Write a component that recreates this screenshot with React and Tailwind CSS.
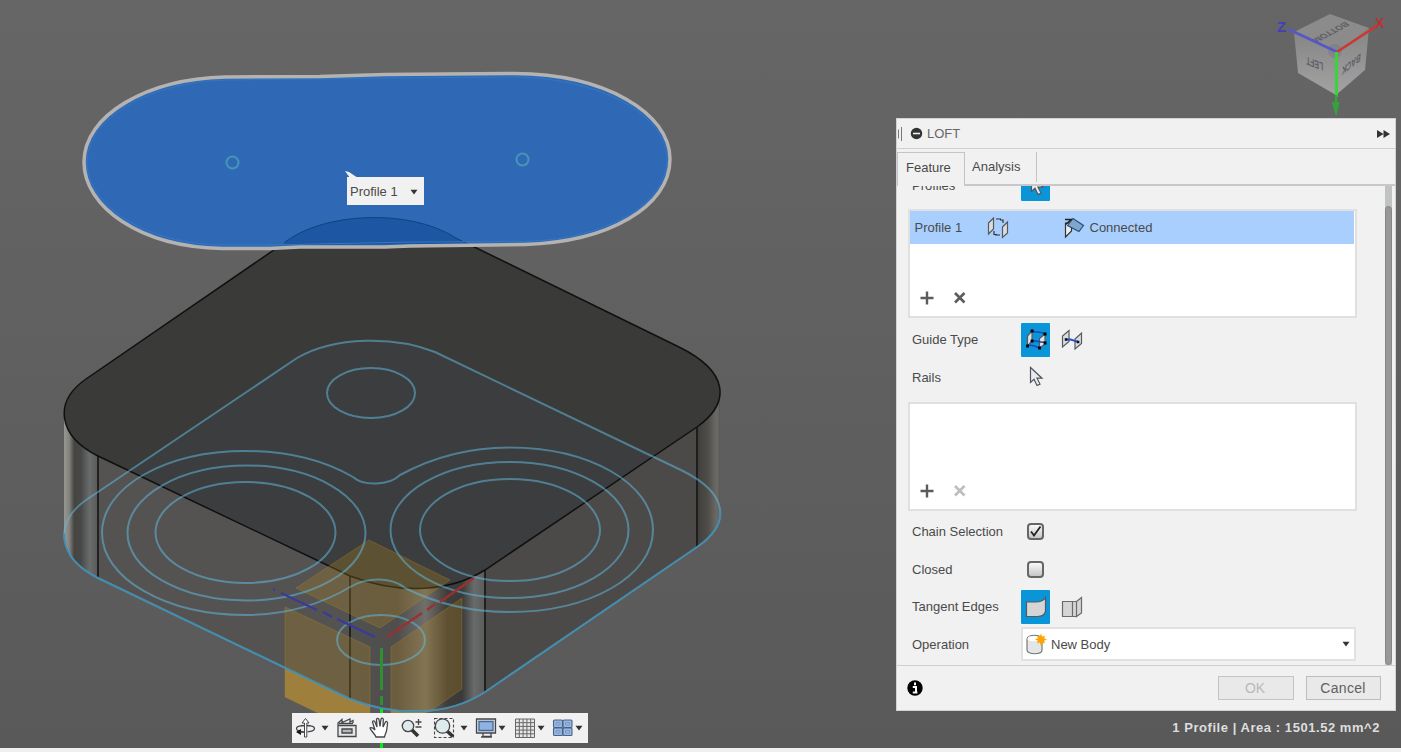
import React from "react";

const TOP_FACE =
  "M86 379 L284 243 C322 212 410 208 456 238 L679 347 C728 371 732 402 697 427 L485 570 C450 592 400 595 350 576 L98 456 C58 436 53 402 86 379 Z";
const BOTTOM_FACE =
  "M86 500 L297 358 C335 336 395 336 435 352 L683 471 C729 494 731 524 697 547 L485 692 C450 715 398 718 350 699 L98 578 C58 558 53 523 86 500 Z";
const PILL =
  "M225 77 L320 76.500 L385 74.500 L515 73.500 C605 74 670 113 670 159 C670 207 608 242 525 244.500 L410 246 L385 247 L300 247 L270 248.500 L222 248.500 C140 247 84 207 84 162 C84 115 147 79 225 77 Z";

function Scene() {
  return (
    <svg className="absolute inset-0" width="1401" height="748" viewBox="0 0 1401 748">
      <defs>
        <linearGradient id="cylL" x1="64" x2="98" y1="0" y2="0" gradientUnits="userSpaceOnUse">
          <stop offset="0" stopColor="#979792" />
          <stop offset="0.15" stopColor="#85857f" />
          <stop offset="0.3" stopColor="#454440" />
          <stop offset="0.5" stopColor="#484848" />
          <stop offset="0.75" stopColor="#6a6c6c" />
          <stop offset="1" stopColor="#595a5a" />
        </linearGradient>
        <linearGradient id="cylM" x1="350" x2="485" y1="0" y2="0" gradientUnits="userSpaceOnUse">
          <stop offset="0" stopColor="#515150" />
          <stop offset="0.35" stopColor="#4f4e4c" />
          <stop offset="0.56" stopColor="#706f6b" />
          <stop offset="0.72" stopColor="#3e3d3b" />
          <stop offset="0.83" stopColor="#3a3a3a" />
          <stop offset="0.92" stopColor="#696b6b" />
          <stop offset="1" stopColor="#5a5c5c" />
        </linearGradient>
        <linearGradient id="cylR" x1="697" x2="720" y1="0" y2="0" gradientUnits="userSpaceOnUse">
          <stop offset="0" stopColor="#403f3c" />
          <stop offset="0.45" stopColor="#4d4c49" />
          <stop offset="0.85" stopColor="#6b6a65" />
          <stop offset="1" stopColor="#5f5f5c" />
        </linearGradient>
        <clipPath id="body">
          <path d={TOP_FACE} />
          <path d={BOTTOM_FACE} />
          <path d="M64 412 L719.500 390 V512 L64 535Z" />
        </clipPath>
        <clipPath id="top"><path d={TOP_FACE} /></clipPath>
        <clipPath id="front"><path d="M55 534 L725 510 V720 H55Z" /></clipPath>
      </defs>

      <g clipPath="url(#body)">
        <rect x="60" y="390" width="300" height="330" fill="#545352" />
        <rect x="480" y="370" width="241" height="350" fill="#4b4a48" />
        <rect x="62" y="390" width="36" height="200" fill="url(#cylL)" />
        <rect x="350" y="540" width="135" height="180" fill="url(#cylM)" />
        <rect x="697" y="370" width="24" height="200" fill="url(#cylR)" />
        <path d="M98 456V578M350 576V699M485 570V692M697 427V547" stroke="#151515" strokeWidth="1.600" />
      </g>
      <path d={TOP_FACE} fill="#3a3a38" />
      <path d={BOTTOM_FACE} fill="#3b3d3e" clipPath="url(#top)" />
      <path d={TOP_FACE} fill="none" stroke="#101010" strokeWidth="1.500" />

      <g fill="#b48418" fillOpacity="0.28" stroke="#b08428" strokeOpacity="0.35">
        <path d="M369 540 L450 580 L380 628 L296 588 Z" />
        <path d="M285 607 L370 647 V738 L285 697 Z" />
        <path d="M391 647 L462 598 V689 L391 738 Z" />
      </g>
      <path d="M285 668 L350 699 L370 706 V738 L285 697 Z" fill="#b08a38" fillOpacity="0.7" />
      <path d="M391 710 L428 711 L391 738 Z" fill="#b08a38" fillOpacity="0.7" />

      <g fill="none" stroke="#62b6da" strokeOpacity="0.55" strokeWidth="2">
        <path d={BOTTOM_FACE} />
        <ellipse cx="371" cy="393" rx="44" ry="25" />
        <ellipse cx="381" cy="640" rx="44" ry="25" />
        <ellipse cx="245.500" cy="532.500" rx="90" ry="50.500" />
        <ellipse cx="246.500" cy="533" rx="119" ry="67.500" />
        <ellipse cx="510" cy="530" rx="90" ry="51" />
        <ellipse cx="509.500" cy="530" rx="119" ry="68" />
        <path d="M353 477 C363 486 389 486 400 475 C437 455 475 447.500 509 447.500 C590 447.500 653 484 653 530 C653 576 590 612 509 612 C470 612 435 603 405 588 C392 577 368 577 352 586 C320 605 285 615 246 615 C165 615 102 578 102 533 C102 487 165 451 246 451 C288 451 325 461 353 477 Z" />
      </g>
      <path d={BOTTOM_FACE} clipPath="url(#front)" fill="none" stroke="#3d8db4" strokeWidth="1.500" />

      <g fill="none" strokeWidth="2.200">
        <path d="M273 589l2 1M281 593l36 17M323 612l9 5M337 619l38 18" stroke="#3a3a9c" />
        <path d="M387 637l35-24M427 610l8-6M440 602l34-24" stroke="#9c3030" />
        <path d="M381.500 648v42M381.500 696v9" stroke="#2f8f31" strokeWidth="3" />
        <path d="M381.500 709v39" stroke="#00ee10" strokeWidth="3" />
      </g>

      <path d={PILL} fill="#2f69b6" />
      <path d="M284 243 C322 212 410 208 456 238 L468 244 L285 245Z" fill="#1d56a3" />
      <path d="M284 243 C322 212 410 208 456 238 L468 244" fill="none" stroke="#10427e" />
      <path d="M225 80 L385 78 L515 77 C600 78 667 115 667 159 C667 205 605 239 525 241.500 L410 242 L270 245 L222 245 C145 244 87 205 87 162 C87 118 150 82 225 80Z" fill="none" stroke="#3577bd" />
      <path d={PILL} fill="none" stroke="#b5b3b2" strokeWidth="3.500" />
      <g fill="none" stroke="#4795b5" strokeWidth="2">
        <circle cx="232.500" cy="162.500" r="6" />
        <circle cx="522.500" cy="159.500" r="6" />
      </g>
      <path d="M345 171 L349 172 L358 178 H350Z" fill="#f1f1f1" />
    </svg>
  );
}

function ViewCube() {
  return (
    <svg className="absolute left-[1270px] top-0" width="125" height="118" viewBox="1270 0 125 118">
      <defs>
        <linearGradient id="cubeSide" x1="0" x2="0" y1="0" y2="1">
          <stop offset="0" stopColor="#858585" />
          <stop offset="1" stopColor="#a3a3a3" />
        </linearGradient>
      </defs>
      <path d="M1330 14 L1369 28 L1337 52 L1294 32Z" fill="#8b8b8b" />
      <path d="M1294 32 L1337 52 L1336 95 L1298 73Z" fill="url(#cubeSide)" />
      <path d="M1337 52 L1369 28 L1365 70 L1336 95Z" fill="url(#cubeSide)" />
      <g fontFamily="Liberation Sans, sans-serif" fontWeight="700" fill="#5c5f66" fontSize="10">
        <text transform="matrix(-.78 .42 -.75 -.5 1345 21.500)">BOTTOM</text>
        <text transform="matrix(-.68 -.26 -.05 -1.150 1323 63)">LEFT</text>
        <text transform="matrix(-.65 .5 .1 -1.150 1361 53)">BACK</text>
      </g>
      <circle cx="1335" cy="51" r="7" fill="#777a88" opacity=".5" />
      <g fill="none" strokeWidth="2.500">
        <path d="M1337 52L1288 29" stroke="#5656c8" />
        <path d="M1337 52L1378 25" stroke="#d03530" />
        <path d="M1336.500 52V97" stroke="#35d638" strokeWidth="3" />
        <path d="M1336 95V113M1333 102L1336 112L1338.500 102" stroke="#38a13a" />
      </g>
      <text x="1277" y="32" fontFamily="Liberation Sans, sans-serif" fontWeight="700" fontSize="15" fill="#4141b5">Z</text>
      <text x="1375" y="28" fontFamily="Liberation Sans, sans-serif" fontWeight="700" fontSize="14" fill="#b53431">X</text>
    </svg>
  );
}

function Caret({ className = "" }) {
  return (
    <svg className={"shrink-0 " + className} width="8" height="6" viewBox="0 0 8 6">
      <path d="M0.500 0.800h7L4 5.500z" fill="#333" />
    </svg>
  );
}

function Tool({ className = "", children }) {
  return (
    <svg className={"shrink-0 " + className} width="22" height="22" viewBox="0 0 22 22" fill="none" stroke="#44474a" strokeWidth="1.300">
      {children}
    </svg>
  );
}

function Toolbar() {
  return (
    <div className="absolute left-[292px] top-[713px] flex h-[30px] w-[296px] items-center bg-[#f1f1f1]">
      <Tool className="ml-[2px]">
        <path d="M20.500 11.500c0-2-4-3-9-3s-9 1-9 3 3 3 7 3.500M20.500 11.500c0 1.800-3 3-7 3.300" />
        <path d="M10.500 20V6h-2.500L11.500 1.500 15 6h-2.200V20z" fill="#fff" strokeWidth="1" />
        <path d="M7 12v6l-5-3z" fill="#111" stroke="none" /><path d="M6 15h4" strokeWidth="1.500" />
      </Tool>
      <Caret className="ml-[5px]" />
      <Tool className="ml-[7px]">
        <path d="M2 8.500h18v11H2z" fill="#e6e6e6" /><path d="M6 12h10v4H6z" fill="#b8b8bc" />
        <path d="M2 8V6l4-3.500v3l8-3.500v3l3-1.500V6M3 6.500h14" />
      </Tool>
      <Tool className="ml-[11px]">
        <path d="M7 20c-1-3-5-6-6-9 1-1 3 0 5 2L3.500 5c.5-1.500 2-1.300 2.500 0L8 10 7.500 2.500c.5-1.500 2-1.300 2.500 0L11 9.500l1-7.500c.6-1.200 2-1 2.300.4L14 10l2.500-5c.7-1 2-.5 2 .7C18.500 8 18 11 17.500 14c-.5 2-1.500 3-2 6z" fill="#fff" />
      </Tool>
      <Tool className="ml-[10px]">
        <path d="M11 13l6 6" stroke="#333" strokeWidth="3.500" />
        <circle cx="7" cy="9" r="5.700" fill="#dfeaec" />
        <path d="M14.500 5h6M17.500 2v6M14.500 10h6" />
      </Tool>
      <Tool className="ml-[10px]">
        <path d="M1.500 1.500h19v19h-19z" strokeDasharray="3 2" strokeWidth="1.100" />
        <path d="M14 14l6 5.500" stroke="#333" strokeWidth="3.500" />
        <circle cx="9.500" cy="9" r="7.200" fill="#dfeaec" />
      </Tool>
      <Caret className="ml-[5px]" />
      <Tool className="ml-[7px]">
        <path d="M1.500 2h19v14h-19z" fill="#ddd" /><path d="M4 4.500h14v9H4z" fill="#8fb2df" stroke="#4668a0" />
        <path d="M8 16v3.500h8V16M6 20h11" />
      </Tool>
      <Caret className="ml-[1px]" />
      <Tool className="ml-[8px]">
        <path d="M1.500 2h19v18.500h-19zM5.300 2v18.500M9.100 2v18.500M12.900 2v18.500M16.700 2v18.500M1.500 5.700h19M1.500 9.400h19M1.500 13.100h19M1.500 16.800h19" fill="#e8e8e8" stroke="#666" strokeWidth="1" />
      </Tool>
      <Caret className="ml-[1px]" />
      <Tool className="ml-[7px]">
        <g fill="#9ab8e0" stroke="#4a6288" strokeWidth="1.100">
          <rect x="1.500" y="3" width="9" height="7.500" rx="1" /><rect x="11" y="3" width="9" height="7.500" rx="1" />
          <rect x="1.500" y="11" width="9" height="7.500" rx="1" /><rect x="11" y="11" width="9" height="7.500" rx="1" />
        </g>
        <path d="M4 5.500h4v2.500H4zM13.500 5.500h4v2.500h-4zM4 13.500h4v2.500H4zM13.500 13.500h4v2.500h-4z" stroke="#6f92c5" strokeWidth=".8" />
      </Tool>
      <Caret className="ml-[1px]" />
    </div>
  );
}

function Icon({ children }) {
  return (
    <svg className="shrink-0" width="22" height="22" viewBox="0 0 22 22" fill="none" stroke="#555a60" strokeWidth="1.200">
      {children}
    </svg>
  );
}

const Pointer = () => (
  <Icon>
    <path d="M6.500 1.500v15l3.500-3.200 3 6.200 3-1.400-3-5.900h5z" fill="#e9ebee" stroke="#50565e" />
  </Icon>
);

function Row({ label, children }) {
  return (
    <div className="flex h-[37.5px] shrink-0 items-center">
      <div className="w-[124px] shrink-0 pl-[15px] pt-px">{label}</div>
      {children}
    </div>
  );
}

function Active({ children }) {
  return <div className="flex h-[34px] w-[29px] shrink-0 items-center justify-center rounded-[1px] bg-[#0b95d9]">{children}</div>;
}

function ListBox({ className = "", disabled, children }) {
  return (
    <div className={"ml-[10.5px] flex h-[109px] w-[449.5px] shrink-0 flex-col border-2 border-[#e0e0e0] bg-white " + className}>
      {children}
      <div className="mt-auto mb-[11px] flex items-center gap-[19px] pl-[10.5px]">
        <svg width="14" height="14" viewBox="0 0 14 14"><path d="M7 .5v13M.5 7h13" stroke="#5c5c5c" strokeWidth="2.400" /></svg>
        <svg width="14" height="14" viewBox="0 0 14 14"><path d="M2 2l9.500 9.500M11.500 2L2 11.500" stroke={disabled ? "#bdbdbd" : "#5c5c5c"} strokeWidth="2.600" /></svg>
      </div>
    </div>
  );
}

function Check({ checked }) {
  return (
    <div className="ml-[6px] flex h-[17px] w-[17px] items-center justify-center rounded-[4px] border-2 border-[#666] bg-linear-to-b from-[#fafafa] to-[#c6c6c6]">
      {checked && <svg className="shrink-0" width="13" height="13" viewBox="0 0 13 13"><path d="M2 6.500l3 4L11.500 1.500" fill="none" stroke="#222" strokeWidth="1.800" /></svg>}
    </div>
  );
}

function LoftPanel() {
  return (
    <div className="absolute left-[896px] top-[118px] flex h-[593px] w-[500px] flex-col border border-[#d2d2d2] bg-[#f1f1f1] text-[13px] leading-4 text-[#4a4a4a]">
      <div className="flex h-[30px] shrink-0 items-center border-b border-[#cfcfcf] text-[#666]">
        <svg width="6" height="14" viewBox="0 0 6 14"><path d="M1.500 2.500v9M4.500 0v14" stroke="#777" strokeWidth="1" /></svg>
        <svg className="ml-[7px]" width="13" height="13" viewBox="0 0 13 13"><circle cx="6.500" cy="6.500" r="5.700" fill="#333" /><path d="M3 6.500h7" stroke="#f1f1f1" strokeWidth="1.600" /></svg>
        <span className="ml-[4px]">LOFT</span>
        <svg className="ml-auto mr-[5px]" width="13" height="8" viewBox="0 0 13 8"><path d="M0 0l6.500 4L0 8zM6.500 0L13 4 6.500 8z" fill="#333" /></svg>
      </div>
      <div className="flex h-[37px] shrink-0 items-stretch pt-[3px]">
        <div className="flex w-[68px] items-center border-l border-r border-t border-[#c4c4c4] pb-[4px] pl-2">Feature</div>
        <div className="flex flex-1 border-b-2 border-[#c8c8c8]">
          <div className="mb-[2px] flex w-[72px] items-center border-r border-[#c4c4c4] pl-[7px]">Analysis</div>
        </div>
      </div>
      <div className="flex h-[479px] shrink-0 overflow-hidden">
        <div className="flex w-[488px] flex-col overflow-hidden">
          <div className="-mt-[19px] flex h-[34px] shrink-0 items-center">
            <div className="w-[124px] pl-[15px] pt-[3px]">Profiles</div>
            <Active><span className="mt-[3px] flex"><Pointer /></span></Active>
          </div>
          <ListBox className="mt-[8px]">
            <div className="flex h-[33px] w-[444.5px] items-center bg-[#a9cfff] pl-[5px]">
              <span className="w-[72px]">Profile 1</span>
              <Icon>
                <path d="M1.500 6L6.500 1v11l-5 5zM15.500 10l5-5v11l-5 4.500z" fill="#ddd" />
                <path d="M9 2h5M16 6V3h-3M13 18H8M7 14v3.500h3" stroke="#333" />
              </Icon>
              <span className="ml-[54px] flex"><Icon>
                <path d="M2.500 6v14l6-6V6z" fill="#eee" stroke="#333" />
                <path d="M4.500 8.500L10 1.500l10.500 7L16 14.500z" fill="#7fa6cc" stroke="#2c4f76" />
                <path d="M2 2.500h7M2.500 7.500L9 2" stroke="#222" strokeWidth="1.600" />
              </Icon></span>
              <span className="ml-[5px]">Connected</span>
            </div>
          </ListBox>
          <div className="mt-[3px] flex flex-col">
            <Row label="Guide Type">
              <Active><Icon>
                <path d="M2.500 17V7L7 2v10zM14.500 19V9.500L20 5v10z" fill="#e3e3e5" />
                <path d="M7 2c4 2 8 0 13 3M7 12c4-1 8 2 13 1M2.500 17c4-2 8 0 12 2" stroke="#1745b8" strokeWidth="1.500" />
                <path d="M7 2h.1M20 5h.1M7 12h.1M20 14h.1M2.500 17h.1M14.500 19h.1" stroke="#000" strokeWidth="2.800" strokeLinecap="square" />
              </Icon></Active>
              <span className="ml-[11px] flex"><Icon>
                <path d="M1.500 18V7L8 1.500v11zM14 20V10l6.500-6v10.500z" fill="#dcdcde" />
                <path d="M4 10.500h5c3 0 4 2 8 2" stroke="#244fc4" strokeWidth="1.800" /><path d="M5 10.500h.1M17 13h.1" stroke="#111" strokeWidth="2.500" strokeLinecap="square" />
              </Icon></span>
            </Row>
            <Row label="Rails"><span className="ml-[3px] flex"><Pointer /></span></Row>
          </div>
          <ListBox className="mt-[6px]" disabled />
          <div className="mt-[2px] flex flex-col">
            <Row label="Chain Selection"><Check checked /></Row>
            <Row label="Closed"><Check /></Row>
            <Row label="Tangent Edges">
              <Active><Icon><path d="M1.500 6h9c5 0 8-1 10-4.500v14c-1 3.500-4 5-8 5h-11z" fill="#d5d5d5" /></Icon></Active>
              <span className="ml-[11px] flex"><Icon><path d="M1.500 5.500h10v15h-10zM11.500 5.500h4v15h-4zM15.500 5.500l5-4V17l-5 3.500z" fill="#d5d5d5" stroke="#6b6b6b" /></Icon></span>
            </Row>
            <Row label="Operation">
              <div className="flex h-[34px] w-[334.5px] items-center border-2 border-[#e1e1e1] bg-white pl-[2px]">
                <Icon>
                  <path d="M2 6c0-5 15-5 15 0v11c0 5-15 5-15 0z" fill="#e4e5e6" stroke="#777" /><path d="M2.500 6c0 3 14 3 14 0s-14-4-14 0" fill="#fff" stroke="none" />
                  <path d="M16 .5l1.200 3 2.800-.8-.9 2.600L22 6.500l-2.900 1.300.9 2.700-2.800-.9L16 13l-1.200-3.400-2.800.9.900-2.700L10 6.500l2.900-1.200L12 2.700l2.800.8z" fill="#ffa500" stroke="none" />
                </Icon>
                <span className="ml-[4px] pt-px">New Body</span>
                <Caret className="ml-auto mr-[4px]" />
              </div>
            </Row>
          </div>
        </div>
        <div className="flex w-[7px] flex-col bg-[#c1c2c4] pt-[20px]">
          <div className="flex-1 rounded-[4px] border border-[#858585] bg-[#98989b]" />
        </div>
      </div>
      <div className="flex h-[45px] shrink-0 items-center border-t border-[#cfcfcf] pl-[10px] pr-[14px]">
        <svg width="16" height="16" viewBox="0 0 16 16"><circle cx="8" cy="8" r="7.700" fill="#000" /><path d="M8 2.500v2.800M5.800 7h3.200v5M5.800 12.500h4.600" fill="none" stroke="#fff" strokeWidth="2" /></svg>
        <div className="ml-auto flex gap-[12px] text-sm leading-4">
          <div className="flex h-[24px] w-[76px] items-center justify-center border border-[#c3c3c3] bg-[#e9e9e9] pr-[2px] text-[#b9b9b9]">OK</div>
          <div className="flex h-[24px] w-[75px] items-center justify-center border border-[#bdbdbd] bg-[#e9e9e9] pr-px text-[#606060] tracking-[0.3px]">Cancel</div>
        </div>
      </div>
    </div>
  );
}

export default function App() {
  return (
    <div className="relative h-[752px] w-[1401px] overflow-hidden border-b-4 border-[#efefef] bg-linear-to-b from-[#666666] to-[#595959] font-['Liberation_Sans',Arial,sans-serif]">
      <Scene />
      <ViewCube />
      <div className="absolute left-[347px] top-[177px] flex h-[28px] w-[77px] items-center bg-[#f1f1f1] pl-[3px] pt-px text-[13px] text-[#4a4a4a]">
        Profile 1
        <Caret className="ml-auto mr-[6px]" />
      </div>
      <Toolbar />
      <LoftPanel />
      <div className="absolute right-[21px] top-[720px] whitespace-nowrap text-[13px] font-bold leading-4 tracking-[0.55px] text-[#dedede]">1 Profile | Area : 1501.52 mm^2</div>
    </div>
  );
}
